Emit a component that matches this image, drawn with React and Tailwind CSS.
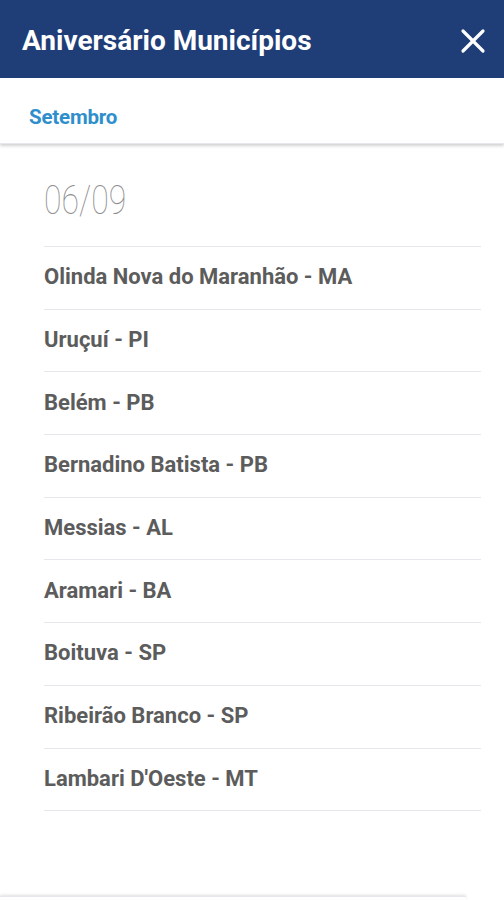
import React from 'react';

const cidades = [
  'Olinda Nova do Maranhão - MA',
  'Uruçuí - PI',
  'Belém - PB',
  'Bernadino Batista - PB',
  'Messias - AL',
  'Aramari - BA',
  'Boituva - SP',
  'Ribeirão Branco - SP',
  "Lambari D'Oeste - MT",
];

function CloseIcon() {
  return (
    <svg width="26" height="26" viewBox="0 0 26 26" fill="none" stroke="white" strokeWidth="3.2" strokeLinecap="round">
      <path d="M3 3 L23 23 M23 3 L3 23" />
    </svg>
  );
}

export default function App() {
  return (
    <div className="h-[900px] w-[504px] bg-white flex flex-col font-['Roboto','Liberation_Sans',sans-serif] overflow-hidden">
      {/* Header */}
      <div className="h-[78px] bg-[#1f3e78] flex items-center justify-between pl-[22px] pr-[18px] pt-[4px] shrink-0">
        <h1 className="text-white text-[28px] font-bold">Aniversário Municípios</h1>
        <CloseIcon />
      </div>

      {/* Tabs */}
      <div className="h-[66px] flex items-center pl-[29px] pt-[14px] shadow-[0_2px_3px_rgba(0,0,0,0.18)] border-b border-gray-200 shrink-0">
        <span className="text-[#2f8fcc] text-[20.5px] font-bold tracking-[-0.2px]">Setembro</span>
      </div>

      {/* Lista */}
      <div className="flex-1 pl-[44px] pr-[23px]">
        <div className="h-[103px] flex items-center border-b border-gray-200 pt-[12px]">
          <span className="inline-block text-[40px] font-thin text-[#8f8f8f] scale-x-80 origin-left leading-none">06/09</span>
        </div>
        {cidades.map((c) => (
          <div key={c} className="h-[62.7px] flex items-center border-b border-gray-200 pb-[2px]">
            <span className="text-[22px] font-bold text-[#5c5c5c]">{c}</span>
          </div>
        ))}
      </div>

      {/* Rodapé */}
      <div className="h-[4px] w-[466px] border-t border-gray-200 shadow-[0_-1px_3px_rgba(0,0,0,0.12)] shrink-0" />
    </div>
  );
}
